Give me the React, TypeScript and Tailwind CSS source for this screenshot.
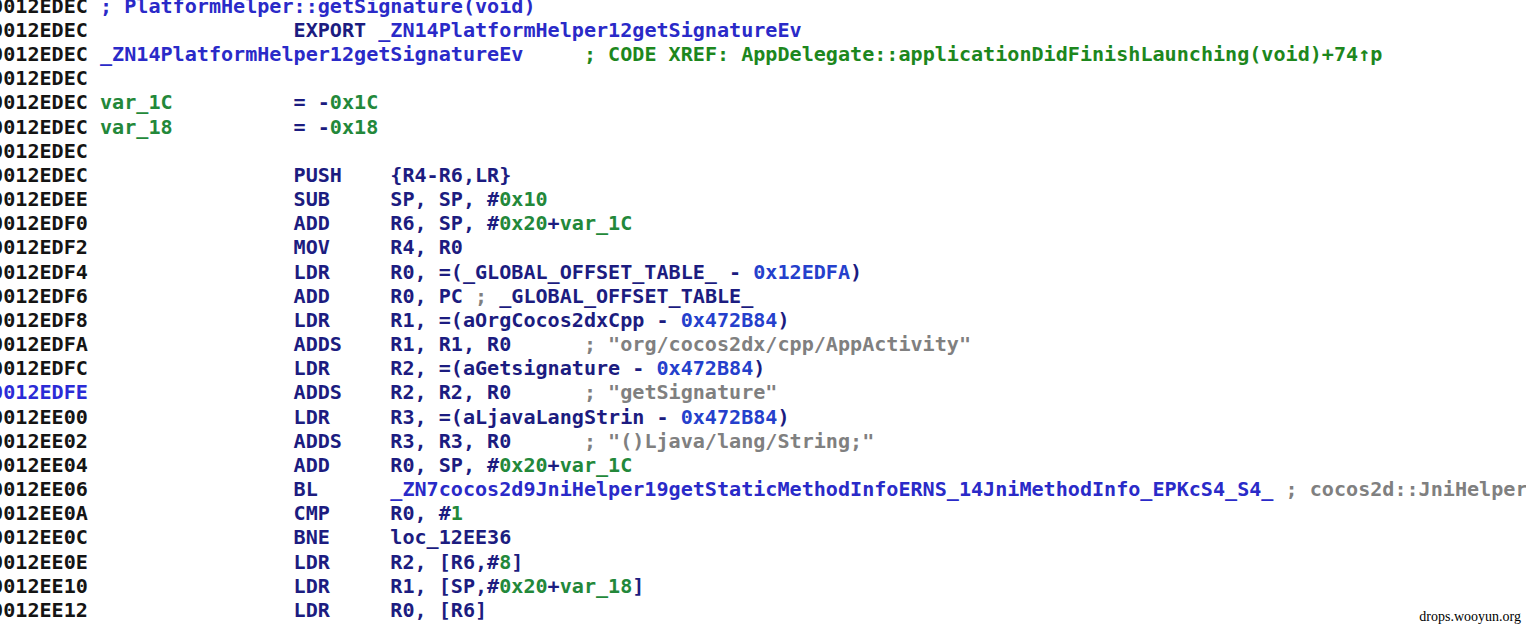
import React from "react";

type Seg = [string, string];

const A = "text-[#141414]";
const AB = "text-[#2b2bd6]";
const N = "text-[#2a2ac8]";
const M = "text-[#1c1c80]";
const G = "text-[#23883a]";
const NB = "text-[#2540cc]";
const C = "text-[#808080]";
const X = "text-[#1d871d]";

const pad = (s: string, n: number) => s + " ".repeat(Math.max(0, n - s.length));

function ins(addr: string, mn: string, ops: Seg[], blueAddr = false): Seg[] {
  return [[pad(addr, 25), blueAddr ? AB : A], [pad(mn, 8), M], ...ops];
}

const rows: Seg[][] = [
  [["0012EDEC ", A], ["; PlatformHelper::getSignature(void)", N]],
  [[pad("0012EDEC", 25), A], ["EXPORT ", M], ["_ZN14PlatformHelper12getSignatureEv", N]],
  [["0012EDEC ", A], [pad("_ZN14PlatformHelper12getSignatureEv", 40), N], ["; CODE XREF: AppDelegate::applicationDidFinishLaunching(void)+74\u2191p", X]],
  [["0012EDEC", A]],
  [["0012EDEC ", A], [pad("var_1C", 16), G], ["= -", M], ["0x1C", G]],
  [["0012EDEC ", A], [pad("var_18", 16), G], ["= -", M], ["0x18", G]],
  [["0012EDEC", A]],
  ins("0012EDEC", "PUSH", [["{R4-R6,LR}", M]]),
  ins("0012EDEE", "SUB", [["SP, SP, #", M], ["0x10", G]]),
  ins("0012EDF0", "ADD", [["R6, SP, #", M], ["0x20", G], ["+", M], ["var_1C", G]]),
  ins("0012EDF2", "MOV", [["R4, R0", M]]),
  ins("0012EDF4", "LDR", [["R0, =(_GLOBAL_OFFSET_TABLE_ - ", M], ["0x12EDFA", NB], [")", M]]),
  ins("0012EDF6", "ADD", [["R0, PC ", M], ["; ", C], ["_GLOBAL_OFFSET_TABLE_", M]]),
  ins("0012EDF8", "LDR", [["R1, =(aOrgCocos2dxCpp - ", M], ["0x472B84", NB], [")", M]]),
  ins("0012EDFA", "ADDS", [[pad("R1, R1, R0", 16), M], ["; \"org/cocos2dx/cpp/AppActivity\"", C]]),
  ins("0012EDFC", "LDR", [["R2, =(aGetsignature - ", M], ["0x472B84", NB], [")", M]]),
  ins("0012EDFE", "ADDS", [[pad("R2, R2, R0", 16), M], ["; \"getSignature\"", C]], true),
  ins("0012EE00", "LDR", [["R3, =(aLjavaLangStrin - ", M], ["0x472B84", NB], [")", M]]),
  ins("0012EE02", "ADDS", [[pad("R3, R3, R0", 16), M], ["; \"()Ljava/lang/String;\"", C]]),
  ins("0012EE04", "ADD", [["R0, SP, #", M], ["0x20", G], ["+", M], ["var_1C", G]]),
  ins("0012EE06", "BL", [
    ["_ZN7cocos2d9JniHelper19getStaticMethodInfoERNS_14JniMethodInfo_EPKcS4_S4_ ", N],
    ["; cocos2d::JniHelper::getStaticMethodInfo(cocos2d::JniMethodInfo_ &,char const*,char const*,char const*)", C],
  ]),
  ins("0012EE0A", "CMP", [["R0, #", M], ["1", G]]),
  ins("0012EE0C", "BNE", [["loc_12EE36", M]]),
  ins("0012EE0E", "LDR", [["R2, [R6,#", M], ["8", G], ["]", M]]),
  ins("0012EE10", "LDR", [["R1, [SP,#", M], ["0x20", G], ["+", M], ["var_18", G], ["]", M]]),
  ins("0012EE12", "LDR", [["R0, [R6]", M]]),
];

export default function App() {
  return (
    <div className="relative h-screen w-full overflow-hidden bg-white">
      <div
        className="ml-[-8.9px] mt-[-6.3px] flex flex-col text-[20.1px] leading-[24.18px] font-bold"
        style={{ fontFamily: '"DejaVu Sans Mono", "Liberation Mono", monospace' }}
      >
        {rows.map((r, i) => (
          <div key={i} className="h-[24.18px] whitespace-pre">
            {r.map(([t, c], j) => (
              <span key={j} className={c}>
                {t}
              </span>
            ))}
          </div>
        ))}
      </div>
      <div
        className="absolute right-[5px] bottom-[7px] text-[14px] text-black"
        style={{ fontFamily: '"Liberation Serif", serif' }}
      >
        drops.wooyun.org
      </div>
    </div>
  );
}
